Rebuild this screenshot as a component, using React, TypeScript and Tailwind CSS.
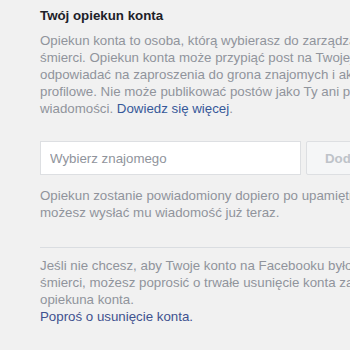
const font = { fontFamily: '"Liberation Sans", Arial, sans-serif' };

export default function App() {
  return (
    <div
      className="h-[350px] w-[350px] overflow-hidden bg-[#f1f1f1] pl-[40px] pt-[7px] text-[13.3px] leading-[17px]"
      style={font}
    >
      <h2 className="whitespace-nowrap font-bold text-[#1d2129]">Twój opiekun konta</h2>

      <p className="mt-[8px] whitespace-nowrap text-[#90949c]">
        Opiekun konta to osoba, którą wybierasz do zarządzania Twoim kontem, jeśli zostanie ono upamiętnione po Twojej
        <br />
        śmierci. Opiekun konta może przypiąć post na Twojej osi czasu,
        <br />
        odpowiadać na zaproszenia do grona znajomych i aktualizować zdjęcie
        <br />
        profilowe. Nie może publikować postów jako Ty ani przeglądać Twoich
        <br />
        wiadomości. <a className="text-[#365899]">Dowiedz się więcej</a>.
      </p>

      <div className="mt-[24px] flex w-[400px]">
        <input
          className="h-[34px] w-[261px] shrink-0 border border-[#dddfe2] bg-white px-[9px] text-[13.3px] text-[#1d2129] outline-none placeholder:text-[#90949c]"
          style={font}
          placeholder="Wybierz znajomego"
        />
        <button
          className="ml-[5px] h-[34px] shrink-0 rounded-[2px] border border-[#dddfe2] bg-[#f5f6f7] pl-[18px] pr-[16px] text-[13.3px] font-bold text-[#bec3c9]"
          style={font}
        >
          Dodaj
        </button>
      </div>

      <p className="mt-[12px] whitespace-nowrap text-[#90949c]">
        Opiekun zostanie powiadomiony dopiero po upamiętnieniu Twojego konta, ale
        <br />
        możesz wysłać mu wiadomość już teraz.
      </p>

      <div className="mt-[26px] h-px w-[320px] bg-[#dadde1]" />

      <p className="mt-[9px] whitespace-nowrap text-[#90949c]">
        Jeśli nie chcesz, aby Twoje konto na Facebooku było upamiętnione po Twojej
        <br />
        śmierci, możesz poprosić o trwałe usunięcie konta zamiast wybierać
        <br />
        opiekuna konta.
        <br />
        <a className="text-[#40528f]">Poproś o usunięcie konta.</a>
      </p>
    </div>
  );
}
